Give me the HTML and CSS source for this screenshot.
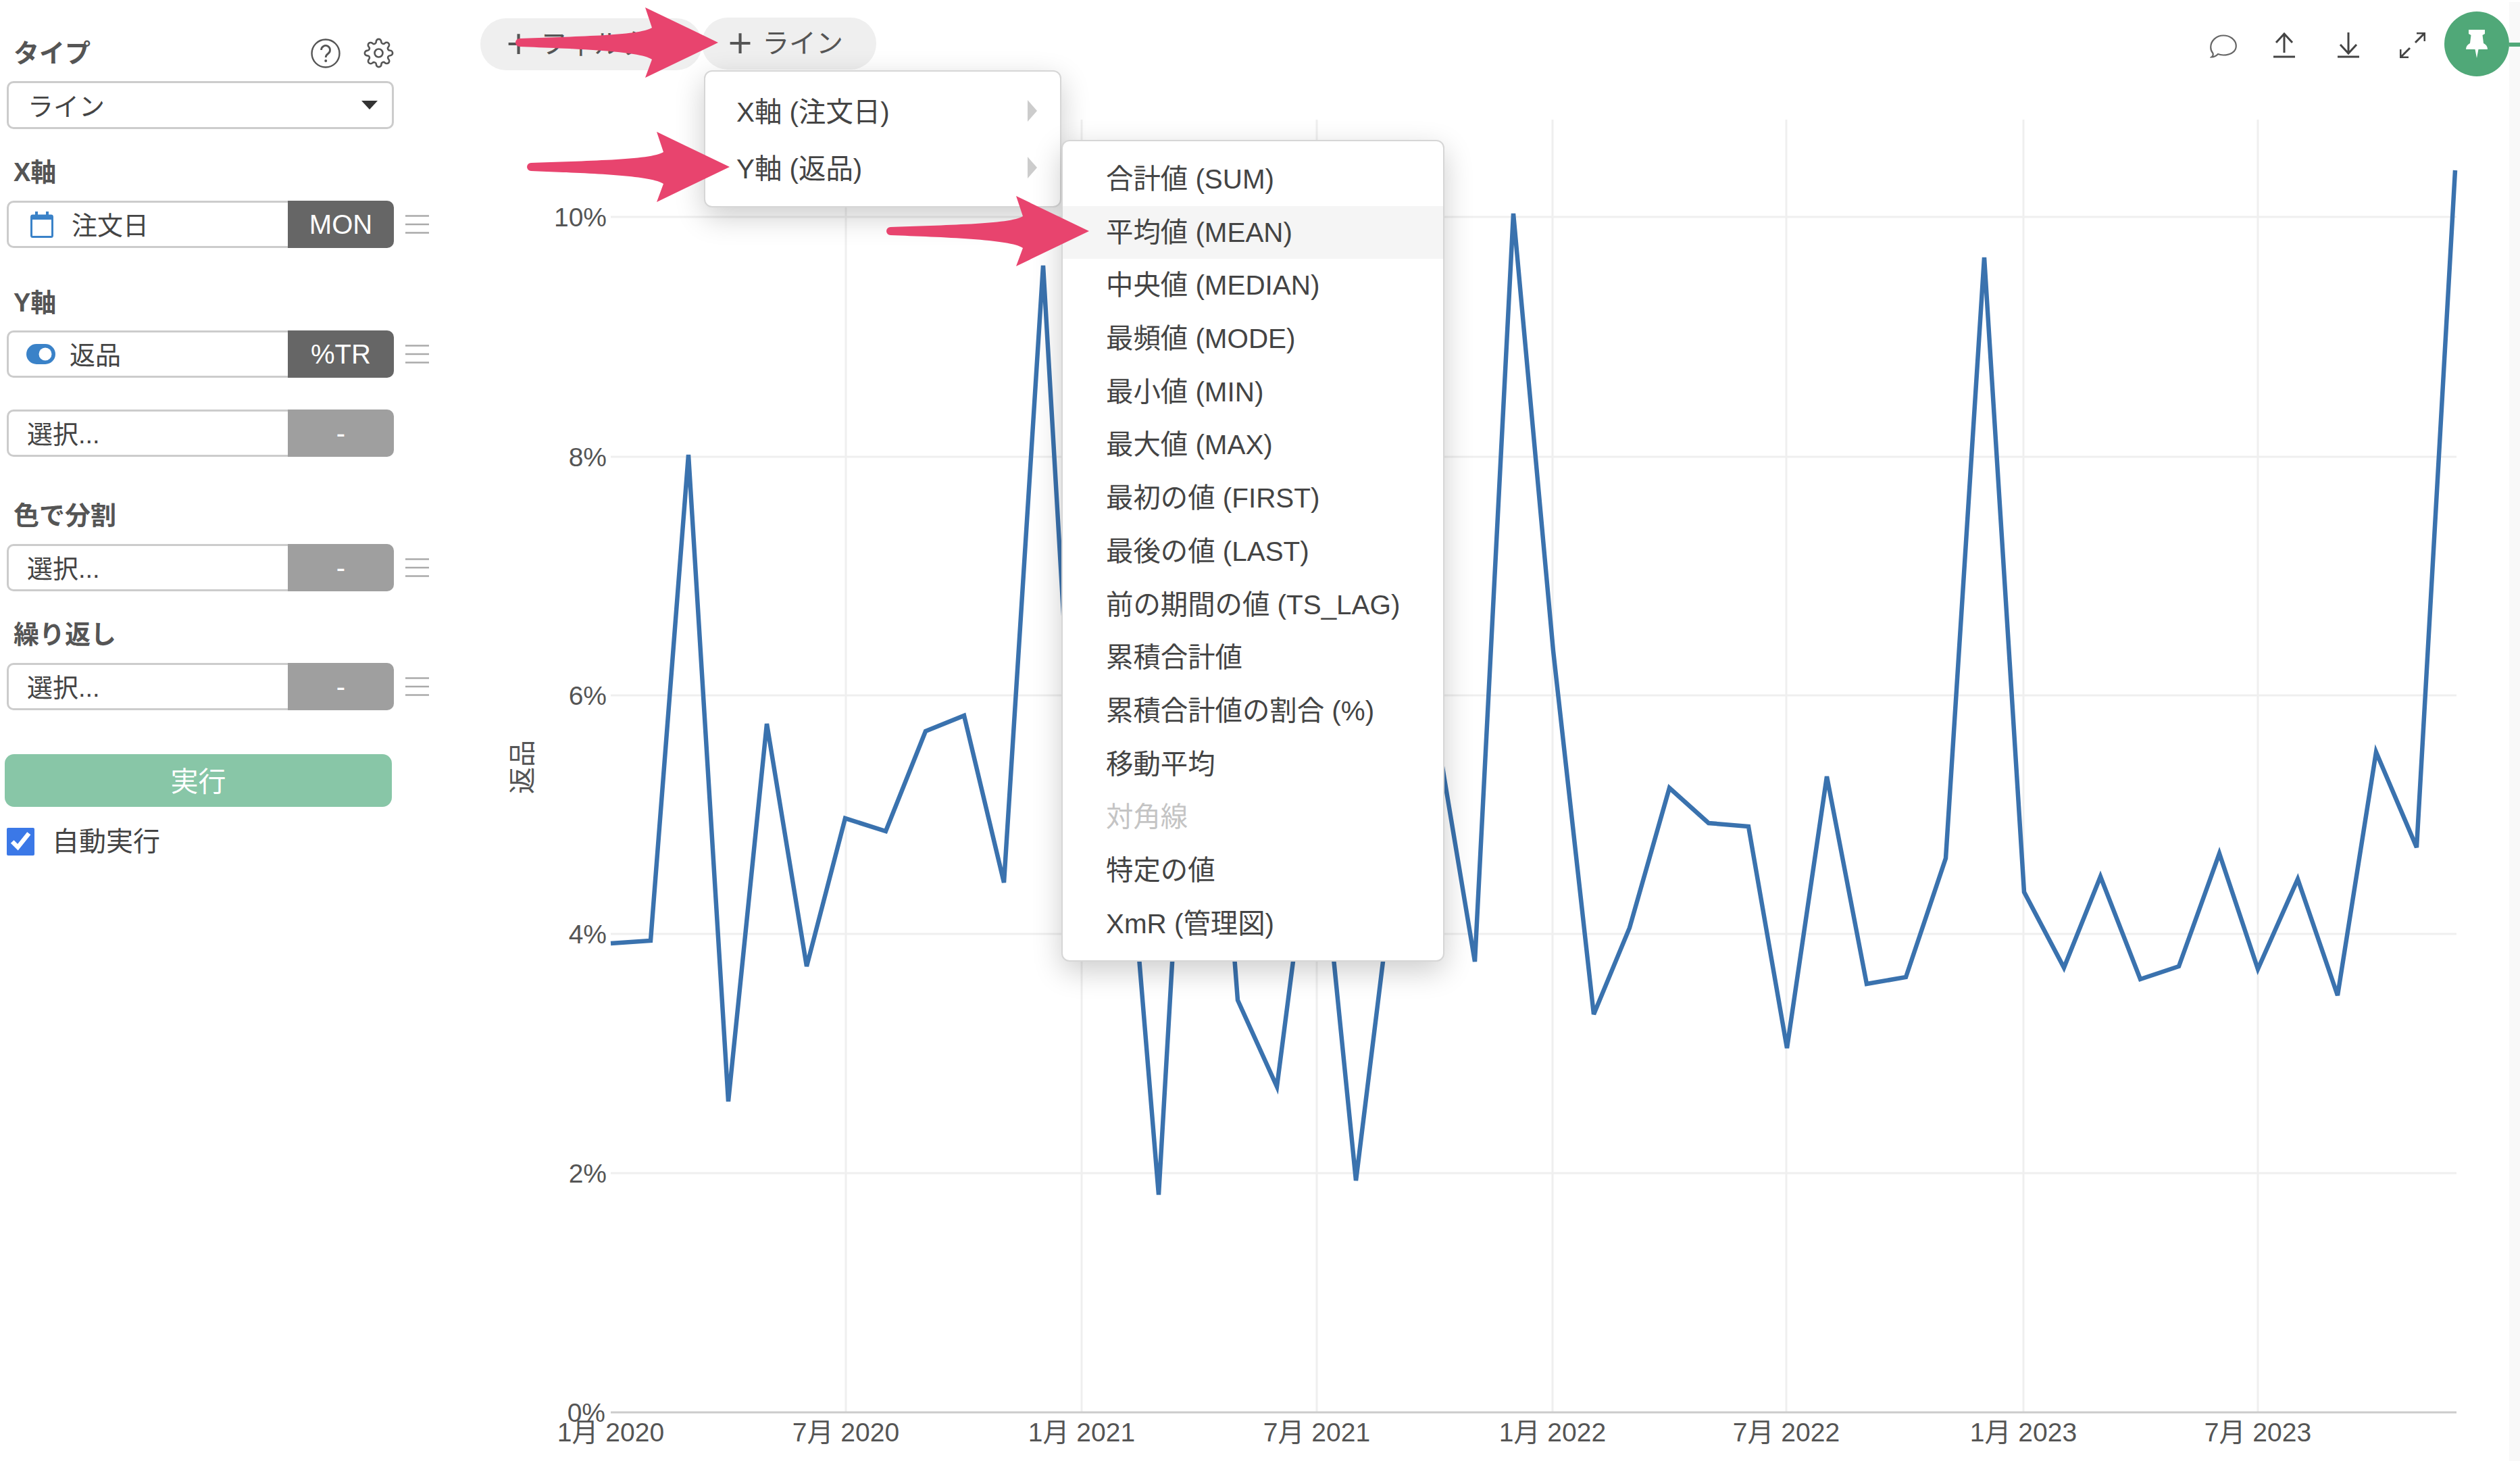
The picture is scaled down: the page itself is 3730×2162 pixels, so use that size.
FILE: index.html
```html
<!DOCTYPE html>
<html lang="ja">
<head>
    <meta charset="UTF-8">
    <meta name="viewport" content="width=device-width, initial-scale=1.0">
    <title>チャート</title>
    <link rel="stylesheet" href="styles.css">
</head>
<body>
<svg class="defs" width="0" height="0">
    <symbol id="arrow-shape" viewBox="0 0 300 104">
        <path d="M6 46 C80 43 185 42 202 30 L192 0 L300 52 L192 104 L202 77 C185 64 80 61 6 58 A6 6 0 0 1 6 46 Z"/>
    </symbol>
    <symbol id="lines-icon" viewBox="0 0 35 28">
        <path d="M0 1.5H35M0 14H35M0 26.5H35" stroke="#aaa" stroke-width="2.5" fill="none"/>
    </symbol>
</svg>

<div class="app">
    <aside class="sidebar">
        <div class="type-head">
            <span class="field-label">タイプ</span>
            <svg class="help-icon" viewBox="0 0 44 44">
                <circle cx="22" cy="22" r="20.5" fill="none" stroke="#555" stroke-width="2.4"/>
                <path d="M15.5 17a6.5 6.5 0 1 1 10 5.5c-2.2 1.5-3.3 2.6-3.3 5.500" fill="none" stroke="#555" stroke-width="2.8"/>
                <circle cx="22.2" cy="33" r="2" fill="#555"/>
            </svg>
            <svg class="gear-icon" viewBox="0 0 24 24" fill="none" stroke="#555" stroke-width="1.4">
                <circle cx="12" cy="12" r="3.2"/>
                <path d="M19.4 15a1.65 1.65 0 0 0 .33 1.82l.06.06a2 2 0 0 1 0 2.83 2 2 0 0 1-2.83 0l-.06-.06a1.65 1.65 0 0 0-1.82-.33 1.65 1.65 0 0 0-1 1.51V21a2 2 0 0 1-2 2 2 2 0 0 1-2-2v-.09A1.65 1.65 0 0 0 9 19.4a1.65 1.65 0 0 0-1.82.33l-.06.06a2 2 0 0 1-2.83 0 2 2 0 0 1 0-2.83l.06-.06a1.65 1.65 0 0 0 .33-1.82 1.65 1.65 0 0 0-1.51-1H3a2 2 0 0 1-2-2 2 2 0 0 1 2-2h.09A1.65 1.65 0 0 0 4.6 9a1.65 1.65 0 0 0-.33-1.82l-.06-.06a2 2 0 0 1 0-2.83 2 2 0 0 1 2.83 0l.06.06a1.65 1.65 0 0 0 1.82.33H9a1.65 1.65 0 0 0 1-1.51V3a2 2 0 0 1 2-2 2 2 0 0 1 2 2v.09a1.65 1.65 0 0 0 1 1.51 1.65 1.65 0 0 0 1.82-.33l.06-.06a2 2 0 0 1 2.83 0 2 2 0 0 1 0 2.83l-.06.06a1.65 1.65 0 0 0-.33 1.82V9a1.65 1.65 0 0 0 1.51 1H21a2 2 0 0 1 2 2 2 2 0 0 1-2 2h-.09a1.65 1.65 0 0 0-1.51 1z"/>
            </svg>
        </div>

        <div class="select-box">
            <span>ライン</span>
            <span class="caret"></span>
        </div>

        <div class="field-label label-x">X軸</div>
        <div class="field">
            <div class="field-box">
                <svg class="cal-icon" viewBox="0 0 34 39">
                    <rect x="1.5" y="6" width="31" height="31.5" rx="2" fill="none" stroke="#3a82c8" stroke-width="3"/>
                    <path d="M1 5h32v7H1zM7 0h4v6H7zM23 0h4v6h-4z" fill="#3a82c8"/>
                </svg>
                <span>注文日</span>
            </div>
            <div class="field-tag">MON</div>
            <svg class="lines-icon"><use href="#lines-icon"/></svg>
        </div>

        <div class="field-label label-y">Y軸</div>
        <div class="field">
            <div class="field-box field-box-toggle">
                <svg class="toggle-icon" viewBox="0 0 43 30">
                    <rect width="43" height="30" rx="15" fill="#3a82c8"/>
                    <circle cx="28" cy="15" r="9.5" fill="#fff"/>
                </svg>
                <span>返品</span>
            </div>
            <div class="field-tag">%TR</div>
            <svg class="lines-icon"><use href="#lines-icon"/></svg>
        </div>
        <div class="field field-next">
            <div class="field-box"><span>選択...</span></div>
            <div class="field-tag field-tag-off">-</div>
        </div>

        <div class="field-label label-color">色で分割</div>
        <div class="field">
            <div class="field-box"><span>選択...</span></div>
            <div class="field-tag field-tag-off">-</div>
            <svg class="lines-icon"><use href="#lines-icon"/></svg>
        </div>

        <div class="field-label">繰り返し</div>
        <div class="field">
            <div class="field-box"><span>選択...</span></div>
            <div class="field-tag field-tag-off">-</div>
            <svg class="lines-icon"><use href="#lines-icon"/></svg>
        </div>

        <button class="run-btn">実行</button>
        <label class="auto-run">
            <input type="checkbox" checked>
            <span>自動実行</span>
        </label>
    </aside>

    <main class="content">
        <div class="toolbar">
            <div class="pill pill-filter"><span class="plus">+</span>フィルタ</div>
            <div class="pill pill-line"><span class="plus">+</span>ライン</div>
            <div class="tools">
                <div class="tool-btn tool-btn-comment">
                    <svg width="40" height="35" viewBox="0 0 40 35">
                        <path d="M2.500 33.500c2-1.200 2.600-3 2-5.500C2.500 25.600 1.200 22.500 1.200 19 1.200 9.300 9.500 1.500 20 1.500S38.800 8.500 38.800 17 30.500 30.500 20 30.500c-3 0-5.800-.5-8-1.400-2.500 2.600-5.800 4.400-9.500 4.400z" fill="none" stroke="#666" stroke-width="2.200"/>
                    </svg>
                </div>
                <div class="tool-btn">
                    <svg width="32" height="38" viewBox="0 0 32 38" fill="none" stroke="#444" stroke-width="3">
                        <path d="M16 2V30M4 15L16 2L28 15M0 36H32"/>
                    </svg>
                </div>
                <div class="tool-btn">
                    <svg width="32" height="38" viewBox="0 0 32 38" fill="none" stroke="#444" stroke-width="3">
                        <path d="M16 0V30M4 18L16 31L28 18M0 36H32"/>
                    </svg>
                </div>
                <div class="tool-btn">
                    <svg width="38" height="38" viewBox="0 0 38 38" fill="none" stroke="#444" stroke-width="3">
                        <path d="M23 15L37 1M25 1H37V13M15 23L1 37M1 25V37H13"/>
                    </svg>
                </div>
                <div class="pin-btn">
                    <svg width="32" height="42" viewBox="0 0 32 42">
                        <path d="M4 0H28V6L24.500 8L26 20C30 22 32 25 32 29H18.500L16 42L13.500 29H0C0 25 2 22 6 20L7.500 8L4 6Z" fill="#fff"/>
                    </svg>
                </div>
            </div>
        </div>

        <svg class="chart" viewBox="700 120 3014 2042">
            <g class="grid">
                <path d="M904 321H3636M904 676H3636M904 1029H3636M904 1382H3636M904 1736H3636"/>
                <path d="M1252 177V2090M1601 177V2090M1949 177V2090M2298 177V2090M2644 177V2090M2995 177V2090M3342 177V2090"/>
            </g>
            <path class="axis-line" d="M904 2090H3636"/>
            <g class="tick-y">
                <text x="898" y="335">10%</text>
                <text x="898" y="690">8%</text>
                <text x="898" y="1043">6%</text>
                <text x="898" y="1396">4%</text>
                <text x="898" y="1750">2%</text>
                <text x="896" y="2104">0%</text>
            </g>
            <g class="tick-x">
                <text x="904" y="2133">1月 2020</text>
                <text x="1252" y="2133">7月 2020</text>
                <text x="1601" y="2133">1月 2021</text>
                <text x="1949" y="2133">7月 2021</text>
                <text x="2298" y="2133">1月 2022</text>
                <text x="2644" y="2133">7月 2022</text>
                <text x="2995" y="2133">1月 2023</text>
                <text x="3342" y="2133">7月 2023</text>
            </g>
            <text class="axis-title" transform="translate(787 1135) rotate(-90)">返品</text>
            <polyline class="series" points="904,1396 963,1392 1019,673 1078,1630 1135,1071 1194,1430 1251,1211 1311,1230 1370,1082 1427,1059 1486,1306 1544,393 1603,1405 1662,1127 1715,1768 1775,740 1832,1480 1890,1608 1948,1160 2007,1747 2067,1261 2124,1069 2183,1423 2240,316 2299,963 2359,1501 2412,1373 2471,1166 2529,1218 2588,1223 2645,1551 2704,1149 2763,1456 2821,1446 2880,1270 2937,381 2996,1320 3055,1432 3109,1297 3168,1449 3225,1430 3285,1263 3342,1434 3401,1301 3460,1473 3517,1113 3577,1254 3634,252"/>
        </svg>
    </main>

    <div class="rail"><div class="rail-tab"></div></div>

    <ul class="menu menu-axis">
        <li>X軸 (注文日)<span class="menu-tri"></span></li>
        <li>Y軸 (返品)<span class="menu-tri"></span></li>
    </ul>

    <ul class="menu menu-calc">
        <li>合計値 (SUM)</li>
        <li class="is-hover">平均値 (MEAN)</li>
        <li>中央値 (MEDIAN)</li>
        <li>最頻値 (MODE)</li>
        <li>最小値 (MIN)</li>
        <li>最大値 (MAX)</li>
        <li>最初の値 (FIRST)</li>
        <li>最後の値 (LAST)</li>
        <li>前の期間の値 (TS_LAG)</li>
        <li>累積合計値</li>
        <li>累積合計値の割合 (%)</li>
        <li>移動平均</li>
        <li class="is-disabled">対角線</li>
        <li>特定の値</li>
        <li>XmR (管理図)</li>
    </ul>

    <svg class="arrow arrow-a"><use href="#arrow-shape"/></svg>
    <svg class="arrow arrow-b"><use href="#arrow-shape"/></svg>
    <svg class="arrow arrow-c"><use href="#arrow-shape"/></svg>
</div>
</body>
</html>
```

FILE: styles.css
```css
* {
    box-sizing: border-box;
}
html, body {
    margin: 0;
    padding: 0;
    background-color: #fff;
}
body {
    font-family: "Liberation Sans", "Noto Sans CJK JP", sans-serif;
    font-size: 38px;
    color: #444;
    overflow: hidden;
}
.defs {
    position: absolute;
}
.app {
    position: relative;
    display: flex;
    width: 3730px;
    height: 2162px;
    overflow: hidden;
}

/* left panel */
.sidebar {
    width: 700px;
    flex: none;
    padding: 57px 0 0 10px;
}
.type-head {
    display: flex;
    align-items: center;
    height: 40px;
    width: 573px;
    margin-bottom: 23px;
}
.type-head .field-label {
    margin: 0 auto 0 0;
    padding-left: 10px;
}
.field-label {
    height: 40px;
    line-height: 44px;
    margin: 42px 0 24px 10px;
    font-size: 38px;
    font-weight: bold;
    color: #555;
}
.label-x {
    margin-top: 42px;
}
.label-y {
    margin-top: 59px;
    margin-bottom: 23px;
}
.label-color {
    margin-top: 65px;
}
.help-icon {
    width: 44px;
    height: 44px;
    margin: 3px 34px 0 0;
}
.gear-icon {
    width: 45px;
    height: 45px;
    margin-top: 3px;
}
.select-box {
    display: flex;
    align-items: center;
    justify-content: space-between;
    width: 573px;
    height: 71px;
    padding: 0 21px 3px 28px;
    border: 3px solid #ccc;
    border-radius: 10px;
}
.caret {
    width: 0;
    height: 0;
    margin-top: 2px;
    border-left: 12px solid transparent;
    border-right: 12px solid transparent;
    border-top: 13px solid #333;
}
.field {
    display: flex;
    align-items: center;
    height: 70px;
}
.field-next {
    margin-top: 47px;
}
.field-box {
    display: flex;
    align-items: center;
    width: 416px;
    height: 100%;
    padding: 0 0 4px 27px;
    border: 3px solid #ccc;
    border-right: none;
    border-radius: 10px 0 0 10px;
}
.field-box-toggle {
    padding-left: 26px;
}
.field-tag {
    width: 157px;
    height: 100%;
    line-height: 70px;
    text-align: center;
    font-size: 40px;
    color: #fff;
    background-color: #666;
    border-radius: 0 10px 10px 0;
}
.field-tag-off {
    background-color: #9f9f9f;
}
.lines-icon {
    width: 35px;
    height: 28px;
    margin-left: 17px;
}
.cal-icon {
    width: 34px;
    height: 39px;
    margin: 4px 27px 0 5px;
}
.toggle-icon {
    width: 43px;
    height: 30px;
    margin: 4px 21px 0 0;
}
.run-btn {
    display: block;
    width: 573px;
    height: 78px;
    margin: 65px 0 0 -3px;
    padding: 0 0 4px;
    font: inherit;
    font-size: 41px;
    color: #fff;
    background-color: #88c6a7;
    border: none;
    border-radius: 14px;
}
.auto-run {
    display: flex;
    align-items: center;
    gap: 26px;
    height: 42px;
    margin-top: 30px;
    font-size: 40px;
    line-height: 42px;
}
.auto-run input {
    width: 41px;
    height: 41px;
    margin: 0;
    accent-color: #3b78e7;
}

/* chart area */
.content {
    width: 3014px;
    flex: none;
}
.toolbar {
    display: flex;
    height: 120px;
    padding: 26px 0 0 11px;
}
.pill {
    height: 77px;
    line-height: 76px;
    padding-left: 35px;
    border-radius: 38px;
    background-color: #efefef;
    color: #555;
    font-size: 40px;
    white-space: nowrap;
}
.pill-filter {
    width: 328px;
    margin-top: 1px;
}
.pill-line {
    width: 258px;
}
.plus {
    margin-right: 11px;
    font-family: "Inter", "Liberation Sans", sans-serif;
    font-size: 66px;
    font-weight: 300;
    line-height: 0;
    vertical-align: -5px;
}
.tools {
    display: flex;
    align-items: flex-start;
    margin-left: auto;
    margin-top: -9px;
}
.tool-btn {
    display: flex;
    justify-content: center;
    width: 95px;
    padding-top: 31px;
}
.tool-btn-comment {
    width: 84px;
    padding-top: 34px;
}
.pin-btn {
    display: flex;
    align-items: center;
    justify-content: center;
    width: 96px;
    height: 96px;
    border-radius: 50%;
    background-color: #50a878;
}
.chart {
    display: block;
    width: 3014px;
    height: 2042px;
}
.grid path {
    fill: none;
    stroke: #efefef;
    stroke-width: 3;
}
.axis-line {
    stroke: #ccc;
    stroke-width: 3;
}
.tick-y text {
    text-anchor: end;
    font-size: 39px;
    fill: #555;
}
.tick-x text {
    text-anchor: middle;
    font-size: 39px;
    fill: #555;
}
.axis-title {
    text-anchor: middle;
    font-size: 40px;
    fill: #555;
}
.series {
    fill: none;
    stroke: #3a72ae;
    stroke-width: 6.5;
}
.rail {
    width: 16px;
    flex: none;
    margin-top: 3px;
    background-color: #f9f9f9;
}
.rail-tab {
    height: 6px;
    margin-top: 60px;
    background-color: #50a878;
}

/* dropdown menus */
.menu {
    position: absolute;
    margin: 0;
    list-style: none;
    background-color: #fff;
    border: 2px solid #d6d6d6;
    border-radius: 12px;
    box-shadow: 0 14px 44px rgba(0, 0, 0, 0.2);
    font-size: 40.4px;
    color: #444;
}
.menu-axis {
    left: 1042px;
    top: 104px;
    width: 529px;
    height: 203px;
    padding: 16px 0;
}
.menu-axis li {
    position: relative;
    height: 84px;
    line-height: 88px;
    padding-left: 46px;
}
.menu-tri {
    position: absolute;
    right: 34px;
    top: 26px;
    border-left: 14px solid #ccc;
    border-top: 16px solid transparent;
    border-bottom: 16px solid transparent;
}
.menu-calc {
    left: 1571px;
    top: 207px;
    width: 567px;
    height: 1216px;
    padding: 17px 0;
}
.menu-calc li {
    height: 78.7px;
    line-height: 78.7px;
    padding-left: 64px;
    white-space: nowrap;
}
.menu-calc .is-hover {
    background-color: #f5f5f5;
}
.menu-calc .is-disabled {
    color: #c4c4c4;
}

/* callout arrows */
.arrow {
    position: absolute;
    width: 300px;
    height: 104px;
    fill: #e8446e;
}
.arrow-a {
    left: 763px;
    top: 11px;
}
.arrow-b {
    left: 780px;
    top: 195px;
}
.arrow-c {
    left: 1312px;
    top: 290px;
}
```
